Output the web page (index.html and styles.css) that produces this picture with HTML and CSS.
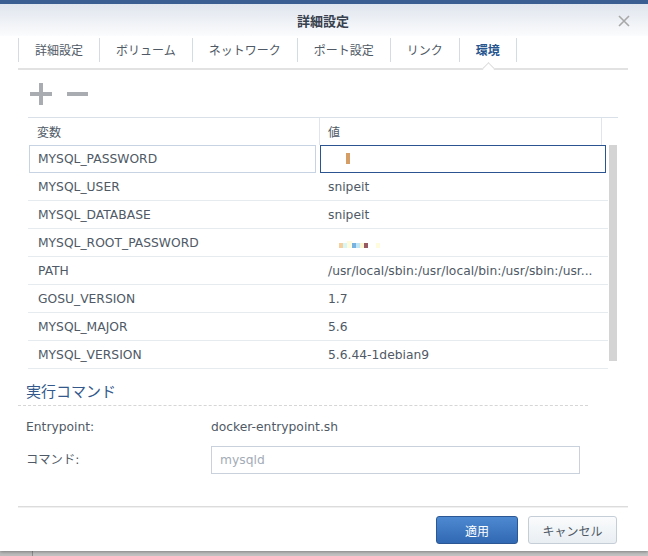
FILE: index.html
```html
<!DOCTYPE html>
<html lang="ja">
<head>
<meta charset="utf-8">
<title>詳細設定</title>
<link rel="stylesheet" href="styles.css">
</head>
<body>
<div class="window">
  <div class="topbar"></div>
  <div class="titlebar">
    <span class="title">詳細設定</span>
    <svg class="close" width="12" height="12" viewBox="0 0 12 12"><path d="M1 1 L11 11 M11 1 L1 11" stroke="#a8a8a8" stroke-width="1.6" fill="none"/></svg>
  </div>
  <div class="content">
    <div class="tabs">
      <div class="tab">詳細設定</div>
      <div class="tab">ボリューム</div>
      <div class="tab">ネットワーク</div>
      <div class="tab">ポート設定</div>
      <div class="tab">リンク</div>
      <div class="tab active">環境</div>
    </div>
    <div class="toolbar">
      <svg class="tool" width="22" height="22" viewBox="0 0 22 22"><rect x="9" y="0" width="4" height="22" fill="#a9adb2"/><rect x="0" y="9" width="22" height="4" fill="#a9adb2"/></svg>
      <svg class="tool minus" width="21" height="22" viewBox="0 0 21 22"><rect x="0" y="9" width="21" height="4" fill="#a9adb2"/></svg>
    </div>
    <div class="grid">
      <div class="grid-head">
        <div class="hcell hname">変数</div>
        <div class="hcell hvalue">値</div>
        <div class="hcell hspace"></div>
      </div>
      <div class="grid-body">
        <div class="rows">
          <div class="row editing">
            <div class="cell name"><div class="edit-box">MYSQL_PASSWORD</div></div>
            <div class="cell value"><div class="edit-box focus"><span class="mask-pw"></span></div></div>
          </div>
          <div class="row"><div class="cell name">MYSQL_USER</div><div class="cell value">snipeit</div></div>
          <div class="row"><div class="cell name">MYSQL_DATABASE</div><div class="cell value">snipeit</div></div>
          <div class="row"><div class="cell name">MYSQL_ROOT_PASSWORD</div><div class="cell value"><span class="masks"><i class="c1"></i><i class="c2"></i><i class="c3 tall"></i><i class="c4"></i><i class="c5"></i><i class="c6"></i><i class="c7"></i><i class="gap"></i><i class="c3"></i></span></div></div>
          <div class="row"><div class="cell name">PATH</div><div class="cell value">/usr/local/sbin:/usr/local/bin:/usr/sbin:/usr...</div></div>
          <div class="row"><div class="cell name">GOSU_VERSION</div><div class="cell value">1.7</div></div>
          <div class="row"><div class="cell name">MYSQL_MAJOR</div><div class="cell value">5.6</div></div>
          <div class="row last"><div class="cell name">MYSQL_VERSION</div><div class="cell value">5.6.44-1debian9</div></div>
        </div>
        <div class="scrollbar"><div class="thumb"></div></div>
      </div>
    </div>
    <div class="section-title">実行コマンド</div>
    <div class="form">
      <div class="frow"><div class="flabel">Entrypoint:</div><div class="fvalue">docker-entrypoint.sh</div></div>
      <div class="frow"><div class="flabel">コマンド:</div><div class="finput">mysqld</div></div>
    </div>
  </div>
  <div class="footer">
    <button class="btn primary">適用</button>
    <button class="btn">キャンセル</button>
  </div>
</div>
</body>
</html>
```

FILE: styles.css
```css
* { box-sizing: border-box; }
html, body { margin: 0; padding: 0; }
body {
  width: 648px;
  height: 556px;
  overflow: hidden;
  background: linear-gradient(to right, #bcbcbc 32px, #8e8e8e 32px, #8e8e8e 33px, #c2c2c2 33px);
  font-family: "DejaVu Sans", "Noto Sans CJK JP", sans-serif;
  font-size: 12px;
  color: #4f5a66;
}
.window {
  width: 648px;
  height: 551px;
  background: #fff;
  display: flex;
  flex-direction: column;
  box-shadow: 0 1px 3px rgba(0,0,0,0.35);
}
.topbar { height: 4px; background: #3a5e91; flex: none; }
.titlebar {
  height: 32px;
  flex: none;
  position: relative;
  display: flex;
  align-items: center;
  justify-content: center;
  background: linear-gradient(to bottom, #dfe5ee, #f3f5f8 70%, #fbfcfd);
}
.title {
  font-family: "Noto Sans CJK JP", sans-serif;
  font-weight: bold;
  font-size: 13px;
  color: #38414e;
  margin-left: -2px;
}
.close { position: absolute; right: 18px; top: 11px; }
.content {
  flex: 1;
  padding: 0 20px 0 18px;
}
.tabs {
  margin-top: 2px;
  height: 32px;
  display: flex;
  align-items: flex-start;
  border-bottom: 2px solid #e2e2e2;
}
.tab {
  position: relative;
  height: 24px;
  line-height: 24px;
  padding: 0 16px;
  border-left: 1px solid #d3dbe4;
  font-family: "Noto Sans CJK JP", sans-serif;
  font-size: 12px;
  color: #505a66;
  white-space: nowrap;
}
.tab:last-child { border-right: 1px solid #d3dbe4; }
.tab.active { color: #27558f; font-weight: 600; }
.tab.active::after {
  content: "";
  position: absolute;
  left: 50%;
  top: 26px;
  width: 8px;
  height: 8px;
  margin-left: -4px;
  background: #fff;
  border-top: 1px solid #dcdcdc;
  border-left: 1px solid #dcdcdc;
  transform: rotate(45deg);
}
.toolbar {
  height: 47px;
  padding: 13px 0 0 12px;
  display: flex;
  align-items: flex-start;
  gap: 15px;
}
.tool { display: block; }
.grid {
  margin-left: 10px;
  width: 590px;
  border-top: 1px solid #d9e0e8;
}
.grid-head { display: flex; height: 27px; }
.hcell {
  font-family: "Noto Sans CJK JP", sans-serif;
  line-height: 27px;
  color: #505a66;
}
.hname { width: 292px; padding-left: 9px; border-right: 1px solid #dfe5ec; }
.hvalue { width: 282px; padding-left: 8px; border-right: 1px solid #dfe5ec; }
.hspace { flex: 1; }
.grid-body { display: flex; height: 224px; }
.rows { width: 580px; }
.row {
  display: flex;
  height: 28px;
  border-bottom: 1px solid #e6ebf0;
}
.row.editing { border-bottom: none; }
.cell {
  height: 27px;
  line-height: 28px;
  font-size: 12.3px;
  white-space: nowrap;
  overflow: hidden;
}
.cell.name { width: 292px; padding-left: 10px; }
.cell.value { width: 288px; padding-left: 8px; padding-right: 4px; }
.row.editing .cell { height: 28px; padding: 0; overflow: visible; }
.edit-box {
  height: 28px;
  line-height: 26px;
  border: 1px solid #c7d3e2;
  padding-left: 8px;
}
.cell.name .edit-box { margin-left: 1px; width: 287px; }
.edit-box.focus { width: 286px; border-color: #2c5490; position: relative; }
.mask-pw {
  position: absolute;
  left: 25px;
  top: 7px;
  width: 4px;
  height: 11px;
  background: #d59e66;
}
.masks { display: inline-flex; align-items: flex-end; margin-left: 11px; vertical-align: middle; height: 8px; }
.masks i { display: block; width: 4px; height: 5px; }
.masks .c1 { background: #f6cf9c; }
.masks .c2 { background: #d6f7f6; }
.masks .c3 { background: #fffbdd; }
.masks .c3.tall { height: 7px; width: 5px; }
.masks .c4 { background: #78b2e0; }
.masks .c5 { background: #bee6f6; }
.masks .c6 { background: #fcf6d0; }
.masks .c7 { background: #985a62; }
.masks .gap { width: 8px; }
.scrollbar { width: 10px; padding-left: 1px; }
.thumb { width: 8px; height: 216px; background: #d4d4d4; }
.section-title {
  margin-top: 12px;
  margin-right: 40px;
  height: 25px;
  padding-left: 8px;
  line-height: 20px;
  font-family: "Noto Sans CJK JP", sans-serif;
  font-size: 15px;
  color: #33598c;
  border-bottom: 1px dashed #d6d6d6;
}
.form { padding-left: 8px; margin-top: 8px; font-size: 12.3px; }
.frow { display: flex; align-items: center; }
.frow + .frow { margin-top: 6px; }
.flabel { width: 185px; line-height: 26px; }
.fvalue { line-height: 26px; }
.finput {
  width: 369px;
  height: 28px;
  line-height: 26px;
  border: 1px solid #c8d1dc;
  padding-left: 8px;
  color: #a3acb6;
}
.footer {
  flex: none;
  margin: 0 20px 0 18px;
  height: 45px;
  border-top: 1px solid #dcdcdc;
  box-shadow: inset 0 1px 0 #f0f0f0;
  padding: 9px 11px 0 0;
  display: flex;
  justify-content: flex-end;
  align-items: flex-start;
  gap: 10px;
}
.btn {
  height: 28px;
  border-radius: 3px;
  font-family: "Noto Sans CJK JP", sans-serif;
  font-size: 12px;
  padding: 0;
  cursor: pointer;
}
.btn.primary {
  width: 82px;
  color: #fff;
  border: 1px solid #2b5894;
  background: linear-gradient(to bottom, #4d89d0, #3169b3);
}
.btn:not(.primary) {
  width: 89px;
  color: #4f5a66;
  border: 1px solid #c5cdd7;
  background: linear-gradient(to bottom, #fafbfc, #e9eef3);
}
```
